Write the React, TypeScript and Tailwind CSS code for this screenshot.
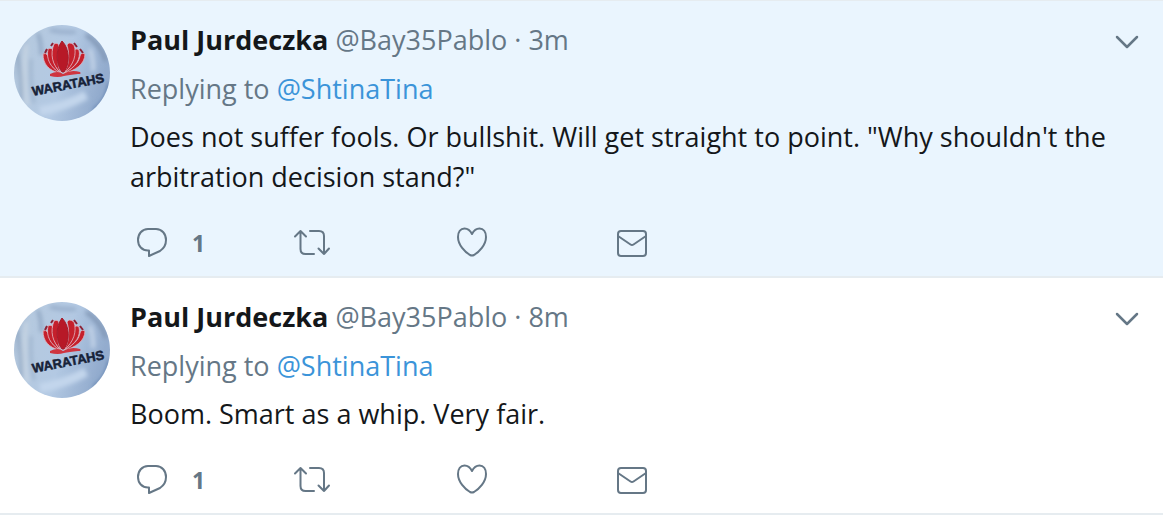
import { ChevronDown } from 'lucide-react'

interface Tweet {
  id: number
  name: string
  handle: string
  age: string
  replyingTo: string
  text: string
  replies: number
  highlighted: boolean
}

const tweets: Tweet[] = [
  {
    id: 1,
    name: 'Paul Jurdeczka',
    handle: 'Bay35Pablo',
    age: '3m',
    replyingTo: 'ShtinaTina',
    text: 'Does not suffer fools. Or bullshit. Will get straight to point. "Why shouldn\'t the arbitration decision stand?"',
    replies: 1,
    highlighted: true,
  },
  {
    id: 2,
    name: 'Paul Jurdeczka',
    handle: 'Bay35Pablo',
    age: '8m',
    replyingTo: 'ShtinaTina',
    text: 'Boom. Smart as a whip. Very fair.',
    replies: 1,
    highlighted: false,
  },
]

function Avatar({ id }: { id: number }) {
  return (
    <svg viewBox="0 0 96 96" className="size-24 rounded-full" role="img" aria-label="Waratahs">
      <defs>
        <linearGradient id={`cloth-${id}`} x1="0" y1="0" x2="1" y2="0.3">
          <stop offset="0" stopColor="#9fb4cd" />
          <stop offset="0.2" stopColor="#b5c9df" />
          <stop offset="0.6" stopColor="#b3c9e3" />
          <stop offset="1" stopColor="#93acce" />
        </linearGradient>
        <filter id={`fold-${id}`} x="-50%" y="-50%" width="200%" height="200%">
          <feGaussianBlur stdDeviation="2" />
        </filter>
      </defs>
      <rect width="96" height="96" fill={`url(#cloth-${id})`} />
      <g filter={`url(#fold-${id})`} fill="none">
        <path d="M12 20q-3 30 1 60" stroke="#cbd7e3" strokeWidth="3" />
        <path d="M3 28q5 25 4 48" stroke="#8299b5" strokeWidth="2" />
        <path d="M17 34q-1 25 3 44" stroke="#94abc6" strokeWidth="2" />
        <path d="M24 8q4 12 3 22" stroke="#8ba2bf" strokeWidth="3" />
        <path d="M36 5q14 3 26 2" stroke="#98aecb" strokeWidth="4" />
        <path d="M72 10q14 8 20 26" stroke="#8096b4" strokeWidth="4" />
        <path d="M76 24q4 12 3 22" stroke="#c4d4e8" strokeWidth="4" />
        <path d="M26 86q24-4 46-16" stroke="#c3d6ec" strokeWidth="9" />
        <path d="M96 58q-2 18-16 28" stroke="#5f80ad" strokeWidth="4" />
      </g>

      {/* waratah flower */}
      <g fill="#c5202c" stroke="#dfb7c2" strokeWidth="0.8" strokeLinejoin="round">
        <path d="M46 48C35 46 29 39 29 29Q32 27 34 31C35 38 39 44 46 48Z" />
        <path d="M50 48C61 46 71 39 71 29Q67 27 66 31C65 38 58 44 50 48Z" />
        <path d="M46 48C36 42 32 34 34 24Q38 22 39 26C38 35 42 43 46 48Z" />
        <path d="M50 48C62 42 67 34 65 25Q61 22 60 27C60 35 56 43 50 48Z" />
        <path d="M47 48C38 40 36 29 40 19Q44 17 45 21C43 31 43 41 47 48Z" />
        <path d="M50 48C60 40 63 29 60 20Q55 16 53 20C56 31 55 40 50 48Z" />
      </g>
      <path d="M48 47C42 40 41 25 48 16C56 24 56 39 50 47Z" fill="#b71927" stroke="#a51a29" />
      <path d="M31 28l2-4M37 21l2-3M60 18l3 4M66 24l3 4" stroke="#8e2336" strokeWidth="2" />
      <path d="M36 49Q44 45 49 49Q57 44 66 47Q68 49 64 49Q55 50 50 51Q44 53 36 51Z" fill="#cf3540" />

      <text
        x="19"
        y="71"
        transform="rotate(-11 19 71)"
        fill="#172238"
        stroke="#172238"
        strokeWidth="0.5"
        fontSize="13"
        fontWeight="700"
        className="font-['Liberation_Sans',Arial,sans-serif]"
      >
        WARATAHS
      </text>
    </svg>
  )
}

function ReplyIcon() {
  return (
    <svg viewBox="0 0 40 40" className="size-10" fill="none" stroke="currentColor" strokeWidth="2" strokeLinejoin="round">
      <path d="M16 6H24C30 6 34 11 34 17C34 23 31 26 28 28L17 33V27.5H16C10 27.5 6 23 6 17C6 11 10 6 16 6Z" />
    </svg>
  )
}

function RetweetIcon() {
  return (
    <svg viewBox="0 0 40 40" className="size-10" fill="none" stroke="currentColor" strokeWidth="2" strokeLinecap="round" strokeLinejoin="round">
      <path d="M3 13.5L8.5 8L14 13.5M8.5 8V26Q8.5 31 13.5 31H22" />
      <path d="M18 8H27Q32 8 32 13V31M26.500 25.500L32 31L37 25.500" />
    </svg>
  )
}

function HeartIcon() {
  return (
    <svg viewBox="0 0 40 40" className="size-10" fill="none" stroke="currentColor" strokeWidth="2" strokeLinejoin="round">
      <path d="M20 11C18 7 15 5.5 12.500 5.5C8.500 5.5 6 9 6 14C6 22 13 29 18 32Q20 33 22 32C27 29 34 22 34 14C34 9 31.500 5.5 27.500 5.5C25 5.5 22 7 20 11Z" />
    </svg>
  )
}

function MailIcon() {
  return (
    <svg viewBox="0 0 40 40" className="size-10" fill="none" stroke="currentColor" strokeWidth="2" strokeLinejoin="round">
      <rect x="6" y="8" width="28" height="25" rx="3" />
      <path d="M6 13L18.500 21.500Q20 22.500 21.500 21.500L34 13" />
    </svg>
  )
}

function TweetRow({ tweet }: { tweet: Tweet }) {
  return (
    <article
      className={`flex gap-5 border-b-2 border-[#e6ecf0] pt-6 pr-4 pl-3.5 ${
        tweet.highlighted ? 'bg-[#eaf5fe]' : 'bg-white'
      }`}
    >
      <a href="#profile" className="size-24 shrink-0">
        <Avatar id={tweet.id} />
      </a>
      <div className="-mt-[5px] min-w-0 flex-1">
        <header className="flex h-10 items-center justify-between">
          <div className="text-[27px] leading-10 text-[#657786]">
            <a href="#profile" className="font-bold text-[#14171a]">{tweet.name}</a>{' '}
            <a href="#profile">@{tweet.handle}</a> · <a href="#status">{tweet.age}</a>
          </div>
          <button aria-label="More options" className="mt-1 text-[#657786]">
            <ChevronDown size={40} strokeWidth={1.5} />
          </button>
        </header>
        <p className="mt-[9px] text-[27px] leading-10 text-[#657786]">
          Replying to <a href="#profile" className="text-[#3b94d9]">@{tweet.replyingTo}</a>
        </p>
        <p className="mt-2 text-[27px] leading-10 text-[#14171a]">{tweet.text}</p>
        <div className="mt-[26px] flex pb-[13px] pl-0.5 text-[#657786]">
          <button aria-label="Reply" className="flex w-40 items-center gap-5">
            <ReplyIcon />
            <span className="text-[23px] font-bold">{tweet.replies}</span>
          </button>
          <button aria-label="Retweet" className="w-40">
            <RetweetIcon />
          </button>
          <button aria-label="Like" className="w-40">
            <HeartIcon />
          </button>
          <button aria-label="Direct message" className="w-40">
            <MailIcon />
          </button>
        </div>
      </div>
    </article>
  )
}

export default function App() {
  return (
    <main className="min-h-screen border-t border-[#e6ecf0] bg-white font-['Segoe_UI','Open_Sans',sans-serif]">
      {tweets.map(tweet => (
        <TweetRow key={tweet.id} tweet={tweet} />
      ))}
    </main>
  )
}
